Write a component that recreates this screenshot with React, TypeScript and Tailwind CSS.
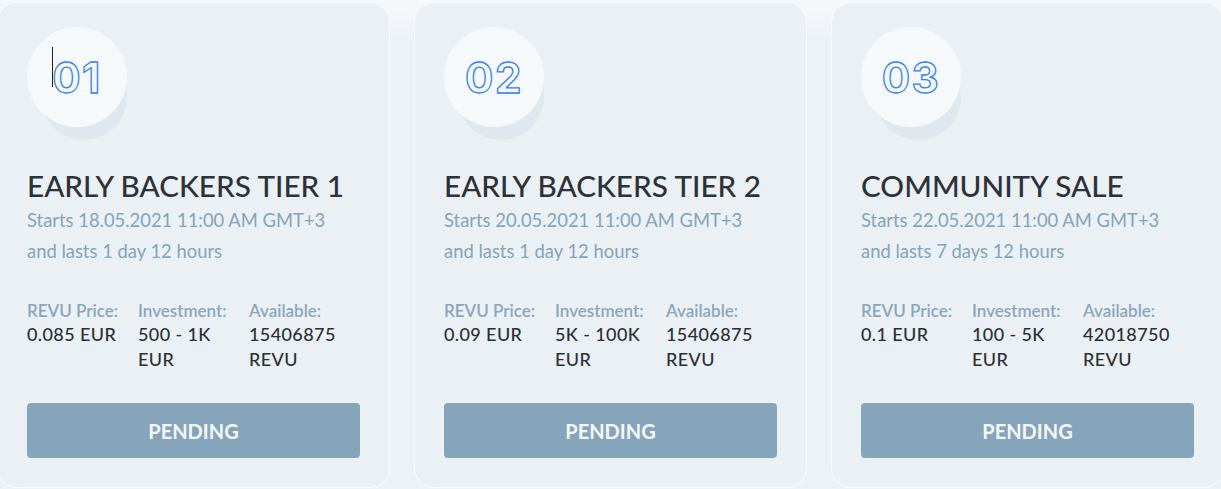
const tiers = [
  {
    num: "01",
    title: "EARLY BACKERS TIER 1",
    starts: "18.05.2021 11:00 AM GMT+3",
    lasts: "1 day 12 hours",
    price: "0.085 EUR",
    investment: "500 - 1K EUR",
    available: "15406875 REVU",
    caret: true,
  },
  {
    num: "02",
    title: "EARLY BACKERS TIER 2",
    starts: "20.05.2021 11:00 AM GMT+3",
    lasts: "1 day 12 hours",
    price: "0.09 EUR",
    investment: "5K - 100K EUR",
    available: "15406875 REVU",
  },
  {
    num: "03",
    title: "COMMUNITY SALE",
    starts: "22.05.2021 11:00 AM GMT+3",
    lasts: "7 days 12 hours",
    price: "0.1 EUR",
    investment: "100 - 5K EUR",
    available: "42018750 REVU",
  },
];

type Tier = (typeof tiers)[number];

const Stat = ({ label, value }: { label: string; value: string }) => (
  <div className="pr-3">
    <div className="text-[17px] leading-[22px] font-semibold text-[#8aa6bb]">{label}</div>
    <div className="text-[18px] leading-[25px] font-medium tracking-[0.4px] text-[#2b2f33]">{value}</div>
  </div>
);

const TierCard = ({ tier }: { tier: Tier }) => (
  <div className="w-[393px] h-[486px] shrink-0 rounded-[20px] border border-white/70 bg-[#ebf0f4] px-[29px] pt-[24px]">
    <div className="relative h-[100px] w-[100px]">
      <div className="absolute left-[14px] top-[27px] h-[86px] w-[86px] rounded-full bg-[#e0e7ef]" />
      <div className="relative flex h-[100px] w-[100px] items-center justify-center rounded-full bg-[#f6f9fc]">
        <span className="relative font-['Inter',sans-serif] text-[42px] font-bold tracking-[1.5px] text-transparent [-webkit-text-stroke:1.3px_#3582f0]">
          {tier.caret && (
            <span className="absolute left-0 top-[1px] h-[40px] w-[1px] bg-[#222]" />
          )}
          {tier.num}
        </span>
      </div>
    </div>
    <h2 className="mt-[41px] text-[29.7px] leading-[36px] font-medium text-[#2d3238]">{tier.title}</h2>
    <p className="pt-[1px] text-[18.4px] leading-[31px] text-[#86a3b8]">
      Starts {tier.starts}
      <br />
      and lasts {tier.lasts}
    </p>
    <div className="mt-[33px] grid grid-cols-3">
      <Stat label="REVU Price:" value={tier.price} />
      <Stat label="Investment:" value={tier.investment} />
      <Stat label="Available:" value={tier.available} />
    </div>
    <button className="mt-[31px] flex h-[55px] w-full items-center justify-center rounded-[4px] bg-[#87a5ba] text-[20px] font-bold text-[#f5f8fb]">
      PENDING
    </button>
  </div>
);

export default function App() {
  return (
    <div className="h-[489px] w-[1221px] overflow-hidden bg-gradient-to-b from-[#f6f9fc] to-[#edf2f6] to-[40px] pt-[2px] font-['Lato',sans-serif]">
      <div className="ml-[-3px] flex gap-[24px]">
        {tiers.map((tier) => (
          <TierCard key={tier.num} tier={tier} />
        ))}
      </div>
    </div>
  );
}
